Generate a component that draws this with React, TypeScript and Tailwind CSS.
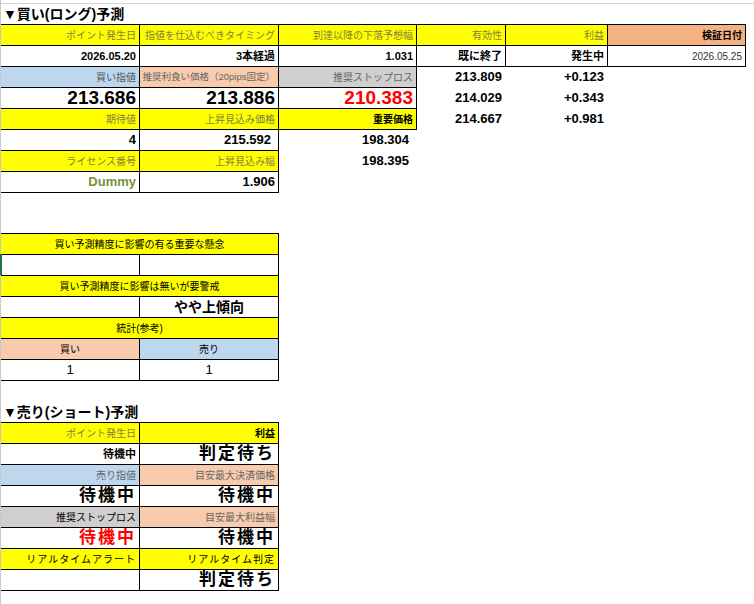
import React from "react";

type C = { w: string; bg?: string; b?: boolean; cls?: string; c?: boolean; children?: React.ReactNode };
const Cell = ({ w, bg = "", b = true, cls = "", c = false, children }: C) => (
  <div
    className={`${w} h-[22px] shrink-0 flex items-center ${c ? "justify-center" : "justify-end"} px-[3px] overflow-hidden whitespace-nowrap ${bg} ${b ? "border border-black -ml-px -mt-px" : "-ml-px -mt-px border border-transparent"} ${cls}`}
  >
    {children}
  </div>
);
const Row = ({ children }: { children: React.ReactNode }) => <div className="flex pl-px">{children}</div>;

const A = "w-[140px]", B = "w-[140px]", Cc = "w-[139px]", D = "w-[90px]", E = "w-[103px]", F = "w-[139px]", AB = "w-[279px]";
const Y = "bg-[#ffff00]", BL = "bg-[#bdd7ee]", PE = "bg-[#f8cbad]", GR = "bg-[#d0cece]", SA = "bg-[#f4b183]";
const lab = "text-[10px] text-[#7f7f3f]";
const labk = "text-[10px] text-black font-bold";
const val = "text-[11px] font-bold text-black";
const big = "text-[19px] font-bold text-black";
const jbig = "text-[17px] font-bold tracking-[2px] text-black";
const num = "text-[13px] font-bold";

export default function App() {
  return (
    <div className="w-[754px] h-[604px] bg-white relative overflow-hidden" style={{ fontFamily: '"Liberation Sans","Noto Sans CJK JP",sans-serif' }}>
      <div className="h-[4px] border-b border-[#d4d4d4]" />
      <div className="absolute left-0 top-0 w-px h-full bg-[#c8c8c8]" />
      <div className="absolute left-0 top-[254px] w-[2px] h-[21px] bg-[#217346]" />
      <div className="h-[20px] pl-[3px] text-[14px] font-bold leading-[20px]">▼買い(ロング)予測</div>
      <div className="pt-px">
        <Row>
          <Cell w={A} bg={Y} cls={lab}>ポイント発生日</Cell>
          <Cell w={B} bg={Y} cls={lab}>指値を仕込むべきタイミング</Cell>
          <Cell w={Cc} bg={Y} cls={lab}>到達以降の下落予想幅</Cell>
          <Cell w={D} bg={Y} cls={lab}>有効性</Cell>
          <Cell w={E} bg={Y} cls={lab}>利益</Cell>
          <Cell w={F} bg={SA} cls={labk}>検証日付</Cell>
        </Row>
        <Row>
          <Cell w={A} cls={val}>2026.05.20</Cell>
          <Cell w={B} cls={val}>3本経過</Cell>
          <Cell w={Cc} cls={val}>1.031</Cell>
          <Cell w={D} cls={val}>既に終了</Cell>
          <Cell w={E} cls={val}>発生中</Cell>
          <Cell w={F} cls="text-[10px] text-[#333]">2026.05.25</Cell>
        </Row>
        <Row>
          <Cell w={A} bg={BL} cls="text-[10px] text-[#555]">買い指値</Cell>
          <Cell w={B} bg={PE} cls="text-[9.5px] text-[#666] px-[2px]">推奨利食い価格（20pips固定）</Cell>
          <Cell w={Cc} bg={GR} cls="text-[10px] text-[#666]">推奨ストップロス</Cell>
          <Cell w={D} b={false} cls={num}>213.809</Cell>
          <Cell w={E} b={false} cls={num}>+0.123</Cell>
        </Row>
        <Row>
          <Cell w={A} cls={big}>213.686</Cell>
          <Cell w={B} cls={big}>213.886</Cell>
          <Cell w={Cc} cls="text-[19px] font-bold text-[#ff0000]">210.383</Cell>
          <Cell w={D} b={false} cls={num}>214.029</Cell>
          <Cell w={E} b={false} cls={num}>+0.343</Cell>
        </Row>
        <Row>
          <Cell w={A} bg={Y} cls={lab}>期待値</Cell>
          <Cell w={B} bg={Y} cls={lab}>上昇見込み価格</Cell>
          <Cell w={Cc} bg={Y} cls={labk}>重要価格</Cell>
          <Cell w={D} b={false} cls={num}>214.667</Cell>
          <Cell w={E} b={false} cls={num}>+0.981</Cell>
        </Row>
        <Row>
          <Cell w={A} cls={num}>4</Cell>
          <Cell w={B} cls={`${num} pr-[7px]`}>215.592</Cell>
          <Cell w={Cc} b={false} cls={`${num} pr-[7px]`}>198.304</Cell>
        </Row>
        <Row>
          <Cell w={A} bg={Y} cls={lab}>ライセンス番号</Cell>
          <Cell w={B} bg={Y} cls={lab}>上昇見込み幅</Cell>
          <Cell w={Cc} b={false} cls={`${num} pr-[7px]`}>198.395</Cell>
        </Row>
        <Row>
          <Cell w={A} cls="text-[13px] font-bold text-[#76933c]">Dummy</Cell>
          <Cell w={B} cls={num}>1.906</Cell>
        </Row>
      </div>

      <div className="mt-[41px]">
        <Row><Cell w={AB} bg={Y} c cls="text-[10px] text-black">買い予測精度に影響の有る重要な懸念</Cell></Row>
        <Row><Cell w={A} /><Cell w={B} /></Row>
        <Row><Cell w={AB} bg={Y} c cls="text-[10px] text-black">買い予測精度に影響は無いが要警戒</Cell></Row>
        <Row><Cell w={A} /><Cell w={B} c cls="text-[14px] font-bold">やや上傾向</Cell></Row>
        <Row><Cell w={AB} bg={Y} c cls="text-[10px]">統計(参考)</Cell></Row>
        <Row><Cell w={A} bg={PE} c cls="text-[10px]">買い</Cell><Cell w={B} bg={BL} c cls="text-[10px]">売り</Cell></Row>
        <Row><Cell w={A} c cls="text-[13px]">1</Cell><Cell w={B} c cls="text-[13px]">1</Cell></Row>
      </div>

      <div className="h-[20px] mt-[21px] pl-[3px] text-[14px] font-bold leading-[20px]">▼売り(ショート)予測</div>
      <div className="pt-px">
        <Row><Cell w={A} bg={Y} cls={lab}>ポイント発生日</Cell><Cell w={B} bg={Y} cls={labk}>利益</Cell></Row>
        <Row><Cell w={A} cls={val}>待機中</Cell><Cell w={B} cls={jbig}>判定待ち</Cell></Row>
        <Row><Cell w={A} bg={BL} cls="text-[10px] text-[#666]">売り指値</Cell><Cell w={B} bg={PE} cls="text-[10px] text-[#666]">目安最大決済価格</Cell></Row>
        <Row><Cell w={A} cls={jbig}>待機中</Cell><Cell w={B} cls={jbig}>待機中</Cell></Row>
        <Row><Cell w={A} bg={GR} cls="text-[10px] text-black">推奨ストップロス</Cell><Cell w={B} bg={PE} cls="text-[10px] text-[#666]">目安最大利益幅</Cell></Row>
        <Row><Cell w={A} cls="text-[17px] font-bold tracking-[2px] text-[#ff0000]">待機中</Cell><Cell w={B} cls={jbig}>待機中</Cell></Row>
        <Row><Cell w={A} bg={Y} cls="text-[10px] text-black tracking-[1px]">リアルタイムアラート</Cell><Cell w={B} bg={Y} cls="text-[10px] text-black tracking-[1px]">リアルタイム判定</Cell></Row>
        <Row><Cell w={A} /><Cell w={B} cls={jbig}>判定待ち</Cell></Row>
      </div>
    </div>
  );
}
